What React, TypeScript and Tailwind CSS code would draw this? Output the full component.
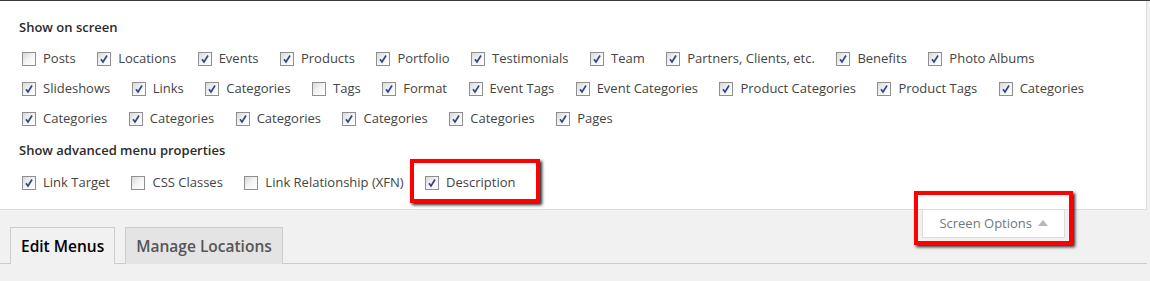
import React from 'react';

type Item = { label: string; checked: boolean };

const showRows: Item[][] = [
  [
    { label: 'Posts', checked: false },
    { label: 'Locations', checked: true },
    { label: 'Events', checked: true },
    { label: 'Products', checked: true },
    { label: 'Portfolio', checked: true },
    { label: 'Testimonials', checked: true },
    { label: 'Team', checked: true },
    { label: 'Partners, Clients, etc.', checked: true },
    { label: 'Benefits', checked: true },
    { label: 'Photo Albums', checked: true },
  ],
  [
    { label: 'Slideshows', checked: true },
    { label: 'Links', checked: true },
    { label: 'Categories', checked: true },
    { label: 'Tags', checked: false },
    { label: 'Format', checked: true },
    { label: 'Event Tags', checked: true },
    { label: 'Event Categories', checked: true },
    { label: 'Product Categories', checked: true },
    { label: 'Product Tags', checked: true },
    { label: 'Categories', checked: true },
  ],
  [
    { label: 'Categories', checked: true },
    { label: 'Categories', checked: true },
    { label: 'Categories', checked: true },
    { label: 'Categories', checked: true },
    { label: 'Categories', checked: true },
    { label: 'Pages', checked: true },
  ],
];

const Checkbox = ({ checked }: { checked: boolean }) => (
  <span className="ml-[3px] w-[14px] h-[14px] border border-[#8f8f8f] bg-gradient-to-br from-[#d9d9d9] via-[#f4f4f4] to-white flex items-center justify-center shrink-0">
    {checked && (
      <svg width="10" height="10" viewBox="0 0 10 10">
        <path d="M2 5.2 L4 8 L8 1.5" fill="none" stroke="#34448f" strokeWidth="1.7" />
      </svg>
    )}
  </span>
);

const Option = ({ item }: { item: Item }) => (
  <label className="flex items-center mr-[18.5px]">
    <Checkbox checked={item.checked} />
    <span className="ml-[7px]">{item.label}</span>
  </label>
);

const RedBox = ({ className }: { className: string }) => (
  <span
    className={`absolute border-[4px] border-[#ff0000] shadow-[2px_2px_3px_rgba(0,0,0,0.85)] pointer-events-none ${className}`}
  />
);

export default function App() {
  return (
    <div className="w-[1150px] h-[281px] bg-[#f1f1f1] border-t border-[#3a3a3a] font-['Open_Sans',sans-serif] text-[13px] text-[#444] overflow-hidden">
      <div className="mr-[3px] bg-white border-r border-b border-[#dcdcdc] pl-[19px] pt-[16px] pb-[11px]">
        <h5 className="h-5 leading-5 font-semibold text-[#2b2b2b]">Show on screen</h5>
        <div className="mt-[7px]">
          {showRows.map((row, i) => (
            <div key={i} className="flex h-[30px] items-center">
              {row.map((item, j) => (
                <Option key={j} item={item} />
              ))}
            </div>
          ))}
        </div>
        <h5 className="mt-[6px] h-5 leading-5 font-semibold text-[#2b2b2b]">Show advanced menu properties</h5>
        <div className="mt-[8px] flex h-[30px] items-center">
          <Option item={{ label: 'Link Target', checked: true }} />
          <Option item={{ label: 'CSS Classes', checked: false }} />
          <Option item={{ label: 'Link Relationship (XFN)', checked: false }} />
          <div className="relative">
            <Option item={{ label: 'Description', checked: true }} />
            <RedBox className="-left-[12px] -right-[6px] -top-[14px] -bottom-[10px]" />
          </div>
        </div>
      </div>

      <div className="mr-[3px] flex justify-between items-start border-b border-[#cccccc]">
        <div className="flex pt-[17px] pl-[10px] -mb-px">
          <span className="px-[10px] leading-6 py-[6px] text-[15.5px] font-semibold text-black bg-[#f1f1f1] border border-b-0 border-[#cccccc]">
            Edit Menus
          </span>
          <span className="ml-[10px] px-[10px] leading-6 py-[6px] text-[15.5px] font-semibold text-[#555] bg-[#e4e4e4] border border-b-0 border-[#cccccc]">
            Manage Locations
          </span>
        </div>
        <div className="relative mr-[82px]">
          <div className="flex items-center h-[27px] px-4 bg-white border border-t-0 border-[#dcdcdc] text-[#72777c] box-content">
            <span>Screen Options</span>
            <span className="ml-[6px] w-0 h-0 border-l-[5px] border-r-[5px] border-b-[6px] border-l-transparent border-r-transparent border-b-[#b4b9be] mb-[2px]" />
          </div>
          <RedBox className="-left-[8px] -right-[8px] -top-[19px] -bottom-[7px]" />
        </div>
      </div>
    </div>
  );
}
